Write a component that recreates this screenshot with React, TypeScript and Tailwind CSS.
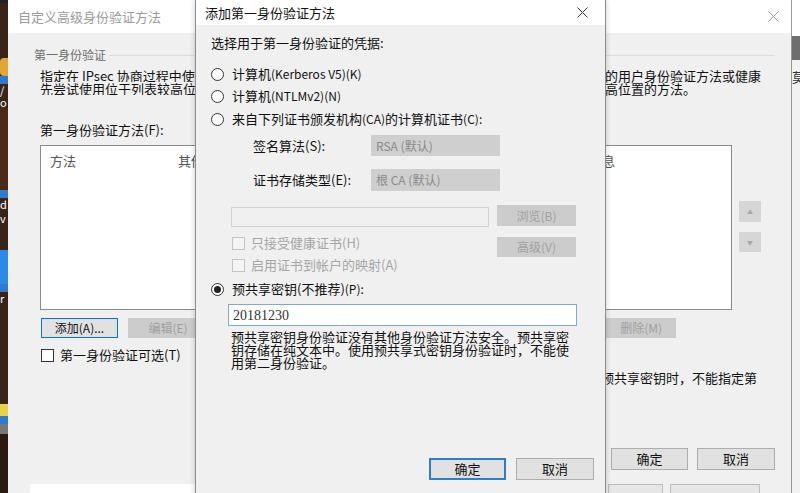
const CloseIcon = ({ color }: { color: string }) => (
  <svg width="11" height="11" viewBox="0 0 11 11">
    <path d="M0.5 0.5 L10.5 10.5 M10.5 0.5 L0.5 10.5" stroke={color} strokeWidth="1" fill="none" />
  </svg>
);

const Radio = ({ checked }: { checked?: boolean }) => (
  <span className="w-[13px] h-[13px] rounded-full border border-[#333] bg-white flex items-center justify-center shrink-0">
    {checked && <span className="w-[7px] h-[7px] rounded-full bg-[#222]" />}
  </span>
);

const CheckBox = ({ disabled }: { disabled?: boolean }) => (
  <span
    className={
      disabled
        ? "w-[13px] h-[13px] border border-[#c4c4c4] bg-[#f4f4f4] shrink-0"
        : "w-[13px] h-[13px] border border-[#333] bg-white shrink-0"
    }
  />
);

const DesktopStrip = () => (
  <div className="w-[8px] shrink-0 bg-[#3a2417] flex flex-col text-[11px] leading-[13px] text-white overflow-hidden">
    <div className="h-[3px] bg-[#222]" />
    <div className="h-[55px]" />
    <div className="h-[18px] bg-[#e3a634] rounded-l-sm" />
    <div className="h-[8px] bg-[#2f7ad0]" />
    <div className="h-[12px] whitespace-nowrap">/</div>
    <div className="h-[12px] whitespace-nowrap">o</div>
    <div className="h-[82px] bg-[#4a2a18]" />
    <div className="h-[8px] bg-[#2f7ad0]" />
    <div className="h-[14px] whitespace-nowrap">d</div>
    <div className="h-[14px] whitespace-nowrap">v</div>
    <div className="h-[24px]" />
    <div className="h-[34px] bg-[#2b8be6]" />
    <div className="h-[8px] bg-[#2f7ad0]" />
    <div className="h-[14px] whitespace-nowrap">r</div>
    <div className="h-[98px]" />
    <div className="h-[12px] bg-[#e8d24a]" />
    <div className="h-[8px] bg-[#2f7ad0]" />
    <div className="h-[10px] bg-[#777]" />
    <div className="flex-1 bg-[#2a1a10]" />
  </div>
);

const RightStrip = () => (
  <div className="w-[9px] shrink-0 flex flex-col overflow-hidden border-l border-[#999]">
    <div className="h-[36px] bg-white" />
    <div className="h-[24px] bg-[#6e6e6e]" />
    <div className="flex-1 bg-[#f2f2f2] text-[13px] leading-[13px] text-[#333] pt-[10px] whitespace-nowrap">
      莫
    </div>
  </div>
);

const BackgroundWindow = () => (
  <div className="flex-1 flex flex-col bg-[#f0f0f0]">
    <div className="h-[33px] bg-white flex items-center justify-between pl-[10px] pr-[12px]">
      <span className="text-[13px] text-[#9a9a9a]">自定义高级身份验证方法</span>
      <CloseIcon color="#9a9a9a" />
    </div>

    <div className="mt-[14px] h-[16px] flex items-center gap-1 pl-[26px] pr-[16px]">
      <span className="text-[12px] text-[#6e6e6e]">第一身份验证</span>
      <div className="flex-1 h-px bg-[#dcdcdc]" />
    </div>

    <div className="mt-[6px] pl-[32px] text-[13px] leading-[13px] text-[#111]">
      <div className="flex whitespace-nowrap">
        <span className="w-[565px] overflow-hidden">指定在 IPsec 协商过程中使用的计算机身份验证方法。首</span>
        <span>的用户身份验证方法或健康</span>
      </div>
      <div className="flex whitespace-nowrap">
        <span className="w-[565px] overflow-hidden">先尝试使用位于列表较高位置的方法。</span>
        <span>高位置的方法。</span>
      </div>
    </div>

    <div className="mt-[27px] h-[16px] flex items-center pl-[32px] text-[13px] text-[#111]">
      第一身份验证方法(F):
    </div>

    <div className="mt-[7px] flex pl-[32px]">
      <div className="w-[692px] h-[165px] bg-white border border-[#8a8a8a]">
        <div className="flex h-[30px] items-center text-[13px] text-[#555] whitespace-nowrap">
          <span className="ml-[9px] w-[128px]">方法</span>
          <span className="w-[411px]">其他</span>
          <span>信息</span>
        </div>
      </div>
      <div className="ml-[7px] pt-[56px] flex flex-col gap-[10px]">
        <div className="w-[22px] h-[21px] bg-[#d6d6d6] flex items-center justify-center text-[6px] text-[#a8a8a8]">▲</div>
        <div className="w-[22px] h-[20px] bg-[#d6d6d6] flex items-center justify-center text-[6px] text-[#a8a8a8]">▼</div>
      </div>
    </div>

    <div className="mt-[8px] flex pl-[33px] text-[12px]">
      <div className="w-[77px] h-[20px] border border-[#0078d7] bg-[#e1e1e1] flex items-center justify-center text-[#111]">
        添加(A)...
      </div>
      <div className="ml-[10px] w-[80px] h-[20px] bg-[#cccccc] flex items-center justify-center text-[#a0a0a0]">
        编辑(E)
      </div>
      <div className="ml-[382px] w-[86px] h-[20px] bg-[#cccccc] flex items-center justify-end pr-[14px] text-[#a0a0a0]">
        删除(M)
      </div>
    </div>

    <div className="mt-[9px] h-[16px] flex items-center gap-[6px] pl-[33px] text-[13px] text-[#111]">
      <CheckBox />
      <span>第一身份验证可选(T)</span>
    </div>

    <div className="mt-[7px] h-[16px] flex items-center pl-[593px] text-[13px] text-[#111] whitespace-nowrap">
      预共享密钥时，不能指定第
    </div>

    <div className="mt-[62px] flex justify-end gap-[9px] pr-[16px] text-[13px] text-[#111]">
      <div className="w-[77px] h-[22px] border border-[#adadad] bg-[#e1e1e1] flex items-center justify-center">确定</div>
      <div className="w-[78px] h-[22px] border border-[#adadad] bg-[#e1e1e1] flex items-center justify-center">取消</div>
    </div>

    <div className="mt-[14px] flex-1 flex">
      <div className="ml-[22px] w-[170px] bg-white" />
      <div className="ml-[408px] w-[55px] border border-b-0 border-[#bdbdbd] bg-[#e6e6e6]" />
      <div className="ml-[7px] w-[90px] border border-b-0 border-[#bdbdbd] bg-[#e6e6e6]" />
    </div>
  </div>
);

const AddMethodDialog = () => (
  <div className="absolute left-[195px] top-0 w-[411px] h-[500px] flex flex-col bg-[#f0f0f0] border-x border-[#8c8c8c] shadow-[0_0_6px_rgba(0,0,0,0.2)]">
    <div className="h-[25px] bg-white flex items-center justify-between pl-[9px] pr-[17px]">
      <span className="text-[13px] text-[#111]">添加第一身份验证方法</span>
      <CloseIcon color="#333" />
    </div>

    <div className="flex flex-col pl-[15px] text-[13px] text-[#111]">
      <div className="mt-[10px] h-[16px] flex items-center">选择用于第一身份验证的凭据:</div>

      <div className="mt-[15px] h-[16px] flex items-center gap-[8px]">
        <Radio />
        <span>
          计算机<span className="text-[12px]">(Kerberos V5)(K)</span>
        </span>
      </div>
      <div className="mt-[6px] h-[16px] flex items-center gap-[8px]">
        <Radio />
        <span>
          计算机<span className="text-[12px]">(NTLMv2)(N)</span>
        </span>
      </div>
      <div className="mt-[7px] h-[16px] flex items-center gap-[8px]">
        <Radio />
        <span>
          来自下列证书颁发机构<span className="text-[12px]">(CA)</span>的计算机证书<span className="text-[12px]">(C):</span>
        </span>
      </div>

      <div className="mt-[8px] h-[21px] flex items-center">
        <span className="ml-[42px] w-[118px]">签名算法(S):</span>
        <div className="w-[129px] h-[21px] bg-[#cfcfcf] flex items-center pl-[5px] text-[12px] text-[#8a8a8a]">RSA (默认)</div>
      </div>
      <div className="mt-[13px] h-[22px] flex items-center">
        <span className="ml-[42px] w-[118px]">证书存储类型(E):</span>
        <div className="w-[129px] h-[22px] bg-[#cfcfcf] flex items-center pl-[5px] text-[12px] text-[#8a8a8a]">根 CA (默认)</div>
      </div>

      <div className="mt-[14px] flex items-start">
        <div className="ml-[20px] mt-[2px] w-[258px] h-[20px] border border-[#d2d2d2] bg-[#f0f0f0]" />
        <div className="ml-[8px] w-[79px] h-[21px] bg-[#cccccc] flex items-center justify-center text-[12px] text-[#a0a0a0]">浏览(B)</div>
      </div>

      <div className="mt-[8px] flex items-start">
        <div className="ml-[21px] w-[265px] flex flex-col gap-[6px] text-[#a6a6a6]">
          <div className="h-[16px] flex items-center gap-[6px]">
            <CheckBox disabled />
            <span>只接受健康证书(H)</span>
          </div>
          <div className="h-[16px] flex items-center gap-[6px]">
            <CheckBox disabled />
            <span>启用证书到帐户的映射(A)</span>
          </div>
        </div>
        <div className="mt-[2px] w-[79px] h-[20px] bg-[#cccccc] flex items-center justify-center text-[12px] text-[#a0a0a0]">高级(V)</div>
      </div>

      <div className="mt-[8px] h-[16px] flex items-center gap-[8px]">
        <Radio checked />
        <span>
          预共享密钥(不推荐)<span className="text-[12px]">(P):</span>
        </span>
      </div>

      <div className="mt-[7px] ml-[17px] w-[349px] h-[22px] bg-white border border-[#7eaad6] flex items-center pl-[4px] text-[#333] font-['Liberation_Serif',serif] text-[14px]">
        20181230
      </div>

      <div className="mt-[4px] ml-[20px] text-[13px] leading-[13px] text-[#111] whitespace-nowrap">
        <div>预共享密钥身份验证没有其他身份验证方法安全。预共享密</div>
        <div>钥存储在纯文本中。使用预共享式密钥身份验证时，不能使</div>
        <div>用第二身份验证。</div>
      </div>

      <div className="mt-[89px] flex gap-[10px] pl-[218px]">
        <div className="w-[77px] h-[22px] border-2 border-[#2a7fd0] bg-[#e1e1e1] flex items-center justify-center">确定</div>
        <div className="w-[78px] h-[22px] border border-[#adadad] bg-[#e1e1e1] flex items-center justify-center">取消</div>
      </div>
    </div>
  </div>
);

const App = () => {
  return (
    <div className="relative w-[800px] h-[493px] overflow-hidden flex bg-[#f0f0f0] font-['Noto_Sans_CJK_SC','Noto_Sans',sans-serif]">
      <DesktopStrip />
      <BackgroundWindow />
      <RightStrip />
      <AddMethodDialog />
    </div>
  );
};

export default App;
